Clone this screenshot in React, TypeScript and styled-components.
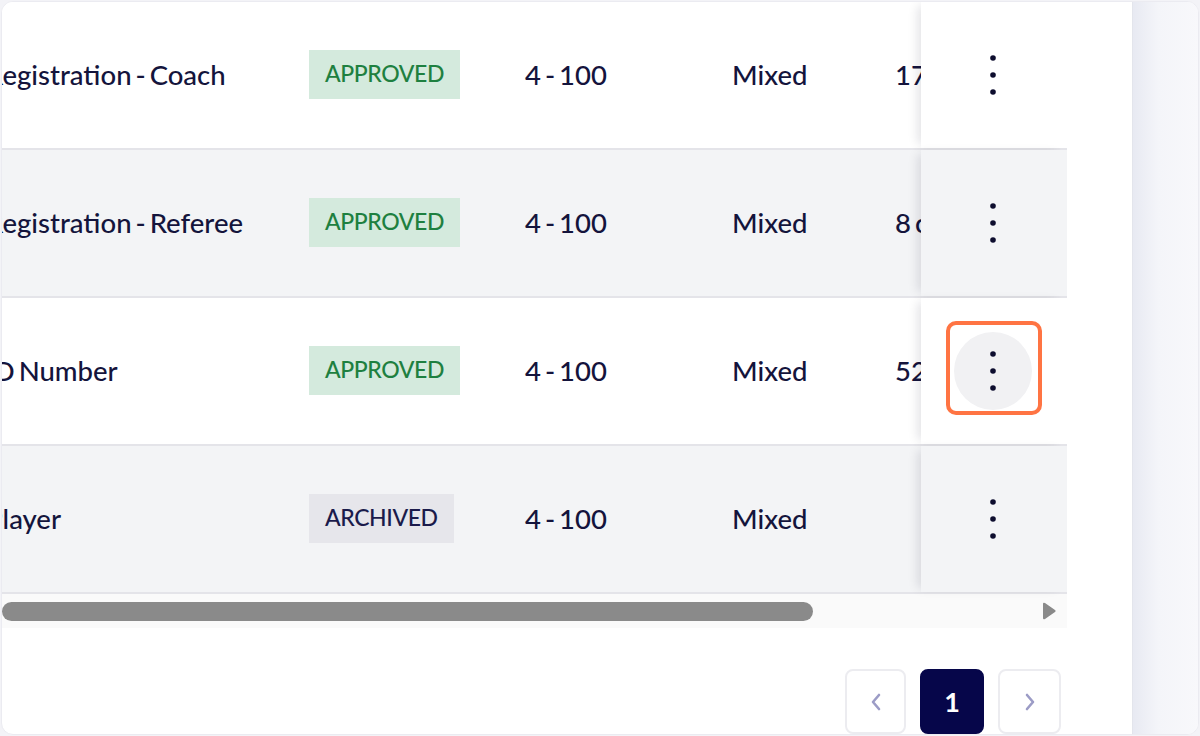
import React from "react";
import styled, { createGlobalStyle } from "styled-components";

const GlobalStyle = createGlobalStyle`
  html, body { margin: 0; padding: 0; }
  body {
    background: #f3f3f7;
    font-family: "Lato", "Noto Sans", sans-serif;
    color: #14143c;
  }
  * { box-sizing: border-box; }
`;

const Card = styled.div`
  margin: 1px;
  width: 1198px;
  height: 734px;
  border: 1px solid #ebebf1;
  border-radius: 12px;
  background: #ffffff;
  display: flex;
  overflow: hidden;
`;

const Main = styled.div`
  width: 1130px;
  display: flex;
  flex-direction: column;
`;

const SidePanel = styled.div`
  flex: 1;
  background: linear-gradient(to right, #e7e9f2, #f4f5f9 40%, #f8f8fb);
  box-shadow: inset 1px 0 0 #e3e5ec;
`;

const Table = styled.div`
  width: 1065px;
  display: flex;
  flex-direction: column;
`;

const Row = styled.div<{ $alt?: boolean }>`
  display: flex;
  height: 148px;
  border-bottom: 2px solid #e4e4e9;
  background: ${(p) => (p.$alt ? "#f3f4f6" : "#ffffff")};
`;

const ScrollPart = styled.div`
  flex: 1;
  overflow: hidden;
  display: flex;
`;

const Cells = styled.div`
  display: flex;
  align-items: center;
  margin-left: -16px;
  flex-shrink: 0;
`;

const Cell = styled.div<{ $w: number }>`
  width: ${(p) => p.$w}px;
  flex-shrink: 0;
  font-size: 27.5px;
  font-weight: 500;
  word-spacing: -3px;
  white-space: nowrap;
  padding-bottom: 2px;
`;

const NameCell = styled(Cell)`
  overflow: hidden;
  text-overflow: clip;
  direction: ltr;
`;

const Badge = styled.span<{ $tone: "approved" | "archived" }>`
  display: inline-flex;
  align-items: center;
  height: 49px;
  padding: 0 16px 2px;
  font-size: 23px;
  font-weight: 500;
  letter-spacing: -0.4px;
  word-spacing: 0;
  background: ${(p) => (p.$tone === "approved" ? "#d4eadd" : "#e6e6eb")};
  color: ${(p) => (p.$tone === "approved" ? "#1e8040" : "#1b1b4b")};
`;

const ActionCell = styled.div`
  position: relative;
  z-index: 1;
  width: 146px;
  flex-shrink: 0;
  display: flex;
  align-items: center;
  justify-content: center;
  background: inherit;
  box-shadow: -7px 0 10px -4px rgba(20, 20, 40, 0.12);
`;

const KebabButton = styled.button<{ $active?: boolean }>`
  position: relative;
  width: 78px;
  height: 78px;
  border: none;
  border-radius: 50%;
  padding: 0;
  margin-left: -2px;
  display: flex;
  align-items: center;
  justify-content: center;
  background: ${(p) => (p.$active ? "#f1f1f3" : "transparent")};
  cursor: pointer;
`;

const Highlight = styled.span`
  position: absolute;
  left: -8px;
  top: -11px;
  width: 96px;
  height: 94px;
  border: 4px solid #ff7443;
  border-radius: 10px;
  pointer-events: none;
`;

const ScrollBar = styled.div`
  width: 1065px;
  height: 34px;
  background: #fafafa;
  display: flex;
  align-items: center;
  padding-right: 10px;
`;

const Thumb = styled.div`
  width: 811px;
  height: 19px;
  border-radius: 10px;
  background: #8a8a8a;
`;

const ScrollArrow = styled.svg`
  margin-left: auto;
`;

const Pagination = styled.div`
  width: 1065px;
  display: flex;
  justify-content: flex-end;
  gap: 14px;
  padding-top: 41px;
  padding-right: 6px;
`;

const PageButton = styled.button<{ $current?: boolean; $w: number }>`
  width: ${(p) => p.$w}px;
  height: 65px;
  border-radius: 8px;
  border: 2px solid ${(p) => (p.$current ? "#06064a" : "#ececf0")};
  background: ${(p) => (p.$current ? "#06064a" : "#ffffff")};
  color: #ffffff;
  font-family: "Lato", sans-serif;
  font-weight: 700;
  font-size: 27px;
  display: flex;
  align-items: center;
  justify-content: center;
  padding: 0;
`;

const Dots = () => (
  <svg width="8" height="42" viewBox="0 0 8 42">
    <circle cx="4" cy="4" r="2.8" fill="#0d0d2e" />
    <circle cx="4" cy="21" r="2.8" fill="#0d0d2e" />
    <circle cx="4" cy="38" r="2.8" fill="#0d0d2e" />
  </svg>
);

const Chevron = ({ dir }: { dir: "left" | "right" }) => (
  <svg width="14" height="22" viewBox="0 0 14 22">
    <path
      d={dir === "left" ? "M10 4 L4 11 L10 18" : "M4 4 L10 11 L4 18"}
      fill="none"
      stroke="#9c9cc6"
      strokeWidth="2.6"
      strokeLinecap="round"
      strokeLinejoin="round"
    />
  </svg>
);

type RowData = {
  name: string;
  status: "approved" | "archived";
  range: string;
  gender: string;
  count: string;
};

const rows: RowData[] = [
  { name: "Registration - Coach", status: "approved", range: "4 - 100", gender: "Mixed", count: "17 coaches" },
  { name: "Registration - Referee", status: "approved", range: "4 - 100", gender: "Mixed", count: "8 coaches" },
  { name: "ID Number", status: "approved", range: "4 - 100", gender: "Mixed", count: "52 players" },
  { name: "Player", status: "archived", range: "4 - 100", gender: "Mixed", count: "" },
];

export default function App() {
  return (
    <>
      <GlobalStyle />
      <Card>
        <Main>
          <Table>
            {rows.map((r, i) => (
              <Row key={i} $alt={i % 2 === 1}>
                <ScrollPart>
                  <Cells>
                    <NameCell $w={323}>{r.name}</NameCell>
                    <Cell $w={216}>
                      <Badge $tone={r.status}>{r.status.toUpperCase()}</Badge>
                    </Cell>
                    <Cell $w={207}>{r.range}</Cell>
                    <Cell $w={163}>{r.gender}</Cell>
                    <Cell $w={200}>{r.count}</Cell>
                  </Cells>
                </ScrollPart>
                <ActionCell>
                  <KebabButton $active={i === 2} aria-label="More actions">
                    <Dots />
                    {i === 2 && <Highlight />}
                  </KebabButton>
                </ActionCell>
              </Row>
            ))}
          </Table>
          <ScrollBar>
            <Thumb />
            <ScrollArrow width="16" height="20" viewBox="0 0 16 20">
              <path d="M2 3 Q2 1 4 2 L14 9 Q15.5 10 14 11 L4 18 Q2 19 2 17 Z" fill="#8a8a8a" />
            </ScrollArrow>
          </ScrollBar>
          <Pagination>
            <PageButton $w={61} aria-label="Previous page">
              <Chevron dir="left" />
            </PageButton>
            <PageButton $w={64} $current>1</PageButton>
            <PageButton $w={63} aria-label="Next page">
              <Chevron dir="right" />
            </PageButton>
          </Pagination>
        </Main>
        <SidePanel />
      </Card>
    </>
  );
}
